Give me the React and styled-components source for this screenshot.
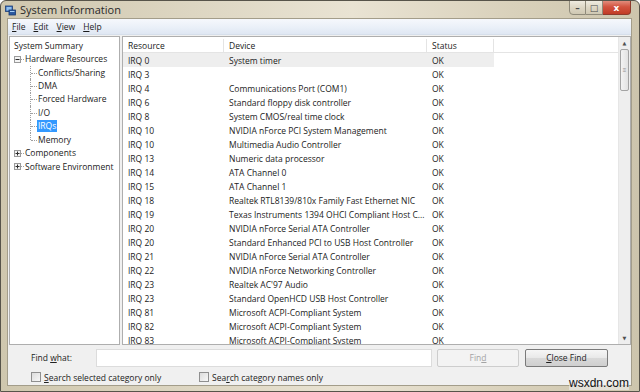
import React from 'react';
import styled, { createGlobalStyle } from 'styled-components';

const GlobalStyle = createGlobalStyle`
  html, body {
    margin: 0;
    padding: 0;
    background: #ffffff;
  }
  * {
    box-sizing: border-box;
  }
`;

const rows = [
  ['IRQ 0', 'System timer'],
  ['IRQ 3', ''],
  ['IRQ 4', 'Communications Port (COM1)'],
  ['IRQ 6', 'Standard floppy disk controller'],
  ['IRQ 8', 'System CMOS/real time clock'],
  ['IRQ 10', 'NVIDIA nForce PCI System Management'],
  ['IRQ 10', 'Multimedia Audio Controller'],
  ['IRQ 13', 'Numeric data processor'],
  ['IRQ 14', 'ATA Channel 0'],
  ['IRQ 15', 'ATA Channel 1'],
  ['IRQ 18', 'Realtek RTL8139/810x Family Fast Ethernet NIC'],
  ['IRQ 19', 'Texas Instruments 1394 OHCI Compliant Host C...'],
  ['IRQ 20', 'NVIDIA nForce Serial ATA Controller'],
  ['IRQ 20', 'Standard Enhanced PCI to USB Host Controller'],
  ['IRQ 21', 'NVIDIA nForce Serial ATA Controller'],
  ['IRQ 22', 'NVIDIA nForce Networking Controller'],
  ['IRQ 23', 'Realtek AC\'97 Audio'],
  ['IRQ 23', 'Standard OpenHCD USB Host Controller'],
  ['IRQ 81', 'Microsoft ACPI-Compliant System'],
  ['IRQ 82', 'Microsoft ACPI-Compliant System'],
  ['IRQ 83', 'Microsoft ACPI-Compliant System'],
];

const Window = styled.div`
  width: 640px;
  height: 392px;
  display: flex;
  flex-direction: column;
  border: 1px solid #57544a;
  border-radius: 6px 6px 0 0;
  background: linear-gradient(90deg, #cfc7ae 0%, #ddd6c2 30%, #e9e3d3 55%, #d9d1bb 80%, #cdc5ad 100%);
  font-family: "Open Sans", "Noto Sans", sans-serif;
  font-size: 8.5px;
  color: #222222;
  overflow: hidden;
  position: relative;
`;

const TitleBar = styled.div`
  height: 18px;
  display: flex;
  align-items: flex-start;
  padding-left: 4px;
  padding-right: 8px;
`;

const TitleText = styled.div`
  margin-top: 1px;
  margin-left: 4px;
  font-size: 11px;
  color: #2a2a2a;
`;

const Controls = styled.div`
  margin-left: auto;
  display: flex;
  margin-top: -1px;
`;

const CtrlButton = styled.div`
  width: ${p => (p.close ? '28px' : '17px')};
  height: 15px;
  display: flex;
  align-items: center;
  justify-content: center;
  border: 1px solid ${p => (p.close ? '#8e3a2c' : '#8f8a7a')};
  border-left: ${p => (p.first ? undefined : 'none')};
  border-radius: ${p => (p.first ? '0 0 0 4px' : p.close ? '0 0 4px 0' : '0')};
  background: ${p =>
    p.close
      ? 'linear-gradient(180deg, #e28c7c 0%, #d2533f 45%, #c13b26 100%)'
      : 'linear-gradient(180deg, #efebe0 0%, #ddd6c4 50%, #cfc8b3 100%)'};
  color: ${p => (p.close ? '#ffffff' : '#4a4a4a')};
  font-family: "DejaVu Sans", sans-serif;
  font-weight: bold;
  font-size: 9px;
`;

const Client = styled.div`
  flex: 1;
  display: flex;
  flex-direction: column;
  margin: 0 7px 5px 6px;
  background: #f0f0f0;
  border: 1px solid #a39d8a;
`;

const MenuBar = styled.div`
  height: 16px;
  display: flex;
  align-items: center;
  gap: 8px;
  padding-left: 4px;
  background: linear-gradient(180deg, #f6f8fc 0%, #eaf0f8 55%, #dfe7f3 100%);
  border-bottom: 1px solid #d6dfeb;
`;

const MenuItem = styled.span`
  color: #1b1b1b;
`;

const Panes = styled.div`
  height: 310px;
  display: flex;
  gap: 2px;
  padding: 1px 0 0 1px;
`;

const TreePane = styled.div`
  width: 111px;
  background: #ffffff;
  border: 1px solid #aeaeae;
  padding: 2px 0 0 3px;
  display: flex;
  flex-direction: column;
`;

const TreeRow = styled.div`
  height: 13.45px;
  display: flex;
  align-items: center;
  padding-left: ${p => p.indent}px;
  white-space: nowrap;
`;

const Connector = styled.div`
  width: 7px;
  height: 100%;
  position: relative;
  flex-shrink: 0;
  &::before {
    content: '';
    position: absolute;
    left: 0;
    top: 0;
    height: ${p => (p.last ? '50%' : '100%')};
    border-left: 1px dotted #a0a0a0;
  }
  &::after {
    content: '';
    position: absolute;
    left: 1px;
    top: 50%;
    width: 6px;
    border-top: 1px dotted #a0a0a0;
  }
`;

const ExpanderWrap = styled.div`
  display: flex;
  align-items: center;
  &::after {
    content: '';
    width: 3px;
    border-top: 1px dotted #a0a0a0;
  }
`;

const Label = styled.span`
  padding: 0 1px;
  line-height: 12px;
  background: ${p => (p.selected ? '#3399ff' : 'transparent')};
  color: ${p => (p.selected ? '#ffffff' : '#222222')};
`;

const ListPane = styled.div`
  flex: 1;
  background: #ffffff;
  border: 1px solid #aeaeae;
  display: flex;
  overflow: hidden;
`;

const Table = styled.div`
  flex: 1;
  display: flex;
  flex-direction: column;
  overflow: hidden;
  padding-top: 2px;
`;

const HeaderRow = styled.div`
  height: 14px;
  flex-shrink: 0;
  display: flex;
  align-items: center;
  border-bottom: 1px solid #e4e4e4;
`;

const Row = styled.div`
  height: 14px;
  flex-shrink: 0;
  display: flex;
  align-items: center;
`;

const Cells = styled.div`
  width: 371px;
  height: 100%;
  display: flex;
  align-items: center;
  background: ${p => (p.hot ? '#eeeeee' : 'transparent')};
`;

const Cell = styled.div`
  width: ${p => p.w}px;
  height: 100%;
  display: flex;
  align-items: center;
  padding-left: 5px;
  white-space: nowrap;
  overflow: hidden;
  border-right: ${p => (p.sep ? '1px solid #e4e4e4' : 'none')};
`;

const ScrollBar = styled.div`
  width: 12px;
  display: flex;
  flex-direction: column;
  background: #eeeeee;
  border-left: 1px solid #e6e6e6;
`;

const Arrow = styled.div`
  height: 12px;
  display: flex;
  align-items: center;
  justify-content: center;
  color: #505050;
  font-size: 5px;
  font-family: "DejaVu Sans", sans-serif;
`;

const Thumb = styled.div`
  height: 42px;
  margin: 0 1px;
  border: 1px solid #a3a3a3;
  border-radius: 2px;
  background: linear-gradient(90deg, #f3f3f3, #e2e2e2);
  display: flex;
  align-items: center;
  justify-content: center;
  color: #8a8a8a;
  font-size: 6px;
`;

const Track = styled.div`
  flex: 1;
`;

const FindArea = styled.div`
  flex: 1;
  display: flex;
  flex-direction: column;
  padding: 3px 0 0 23px;
`;

const FindLine = styled.div`
  display: flex;
  align-items: center;
  height: 19px;
`;

const FindLabel = styled.span`
  width: 65px;
`;

const TextBox = styled.div`
  width: 336px;
  height: 18px;
  background: #ffffff;
  border: 1px solid #dcdcdc;
`;

const Button = styled.div`
  width: ${p => p.w}px;
  height: 18px;
  margin-left: ${p => p.gap}px;
  display: flex;
  align-items: center;
  justify-content: center;
  border: 1px solid ${p => (p.disabled ? '#cdcdcd' : '#7a7a7a')};
  border-radius: 2px;
  background: ${p =>
    p.disabled
      ? '#f3f3f3'
      : 'linear-gradient(180deg, #f6f6f6 0%, #e9e9e9 48%, #d9d9d9 52%, #cfcfcf 100%)'};
  color: ${p => (p.disabled ? '#a4a4a4' : '#1e1e1e')};
`;

const CheckLine = styled.div`
  display: flex;
  align-items: center;
  height: 16px;
  margin-top: 2px;
`;

const Check = styled.label`
  display: flex;
  align-items: center;
  gap: 3px;
  width: ${p => p.w}px;
`;

const Box = styled.span`
  width: 10px;
  height: 10px;
  border: 1px solid #8f8f8f;
  background: linear-gradient(135deg, #dcdcdc, #f7f7f7);
`;

const Watermark = styled.div`
  position: absolute;
  right: 10px;
  bottom: 1px;
  font-family: "Liberation Sans", Arial, sans-serif;
  font-size: 12px;
  color: #111111;
  background: rgba(240, 240, 240, 0.6);
`;

const AppIcon = () => (
  <svg width="11" height="11" viewBox="0 0 11 11" style={{ marginTop: 4 }}>
    <rect x="0.5" y="1" width="7" height="5.5" fill="#3d6fb8" stroke="#1d3f78" strokeWidth="0.8" />
    <rect x="1.5" y="2" width="5" height="3.5" fill="#8fc0f0" />
    <rect x="4" y="5" width="6.5" height="5" fill="#2c5aa0" stroke="#183a70" strokeWidth="0.8" />
    <rect x="5" y="6" width="4.5" height="1" fill="#a8d0f5" />
  </svg>
);

const Expander = ({ open }) => (
  <svg width="7" height="7" viewBox="0 0 7 7">
    <rect x="0.5" y="0.5" width="6" height="6" fill="#f4f4f4" stroke="#9a9a9a" />
    <line x1="1.5" y1="3.5" x2="5.5" y2="3.5" stroke="#2d2d2d" />
    {!open && <line x1="3.5" y1="1.5" x2="3.5" y2="5.5" stroke="#2d2d2d" />}
  </svg>
);

const children = ['Conflicts/Sharing', 'DMA', 'Forced Hardware', 'I/O', 'IRQs', 'Memory'];

const App = () => (
  <>
    <GlobalStyle />
    <Window>
      <TitleBar>
        <AppIcon />
        <TitleText>System Information</TitleText>
        <Controls>
          <CtrlButton first>–</CtrlButton>
          <CtrlButton>□</CtrlButton>
          <CtrlButton close>x</CtrlButton>
        </Controls>
      </TitleBar>
      <Client>
        <MenuBar>
          <MenuItem><u>F</u>ile</MenuItem>
          <MenuItem><u>E</u>dit</MenuItem>
          <MenuItem><u>V</u>iew</MenuItem>
          <MenuItem><u>H</u>elp</MenuItem>
        </MenuBar>
        <Panes>
          <TreePane>
            <TreeRow indent={0}><Label>System Summary</Label></TreeRow>
            <TreeRow indent={1}>
              <ExpanderWrap><Expander open /></ExpanderWrap>
              <Label>Hardware Resources</Label>
            </TreeRow>
            {children.map((c, i) => (
              <TreeRow key={c} indent={17}>
                <Connector last={i === children.length - 1} />
                <Label selected={c === 'IRQs'}>{c}</Label>
              </TreeRow>
            ))}
            <TreeRow indent={1}>
              <ExpanderWrap><Expander /></ExpanderWrap>
              <Label>Components</Label>
            </TreeRow>
            <TreeRow indent={1}>
              <ExpanderWrap><Expander /></ExpanderWrap>
              <Label>Software Environment</Label>
            </TreeRow>
          </TreePane>
          <ListPane>
            <Table>
              <HeaderRow>
                <Cells>
                  <Cell w={101} sep>Resource</Cell>
                  <Cell w={203} sep>Device</Cell>
                  <Cell w={67} sep>Status</Cell>
                </Cells>
              </HeaderRow>
              {rows.map(([r, d], i) => (
                <Row key={i}>
                  <Cells hot={i === 0}>
                    <Cell w={101}>{r}</Cell>
                    <Cell w={203}>{d}</Cell>
                    <Cell w={67}>OK</Cell>
                  </Cells>
                </Row>
              ))}
            </Table>
            <ScrollBar>
              <Arrow>▲</Arrow>
              <Thumb>≡</Thumb>
              <Track />
              <Arrow>▼</Arrow>
            </ScrollBar>
          </ListPane>
        </Panes>
        <FindArea>
          <FindLine>
            <FindLabel>Find <u>w</u>hat:</FindLabel>
            <TextBox />
            <Button disabled w={82} gap={5}>Fin<u>d</u></Button>
            <Button w={83} gap={6}><u>C</u>lose Find</Button>
          </FindLine>
          <CheckLine>
            <Check w={168}><Box /><span><u>S</u>earch selected category only</span></Check>
            <Check w={160}><Box /><span>Sea<u>r</u>ch category names only</span></Check>
          </CheckLine>
        </FindArea>
      </Client>
      <Watermark>wsxdn.com</Watermark>
    </Window>
  </>
);

export default App;
